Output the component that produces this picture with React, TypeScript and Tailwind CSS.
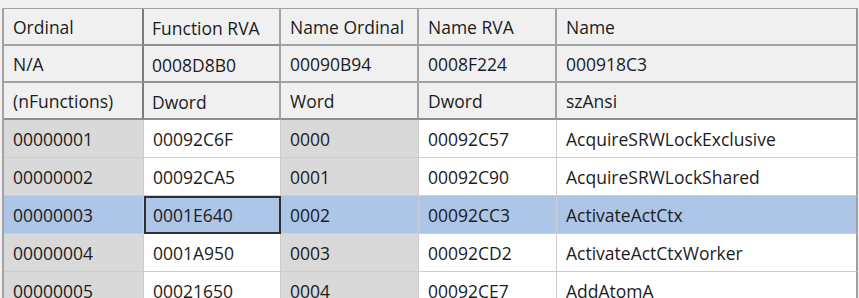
import clsx from 'clsx';

type Row = [string, string, string, string, string];

const header: Row[] = [
  ['Ordinal', 'Function RVA', 'Name Ordinal', 'Name RVA', 'Name'],
  ['N/A', '0008D8B0', '00090B94', '0008F224', '000918C3'],
  ['(nFunctions)', 'Dword', 'Word', 'Dword', 'szAnsi'],
];

const exports: Row[] = [
  ['00000001', '00092C6F', '0000', '00092C57', 'AcquireSRWLockExclusive'],
  ['00000002', '00092CA5', '0001', '00092C90', 'AcquireSRWLockShared'],
  ['00000003', '0001E640', '0002', '00092CC3', 'ActivateActCtx'],
  ['00000004', '0001A950', '0003', '00092CD2', 'ActivateActCtxWorker'],
  ['00000005', '00021650', '0004', '00092CE7', 'AddAtomA'],
];

const widths = ['w-[140px]', 'w-[137px]', 'w-[138px]', 'w-[138px]', 'w-[301px]'];

const selectedRow = 2;
const selectedCol = 1;

export default function App() {
  return (
    <div
      className="w-[859px] h-[298px] overflow-hidden bg-[#f0f0f0] pt-[8px] pl-[2px] text-[17.5px] text-[#1c1c1c]"
      style={{ fontFamily: '"Open Sans", "Noto Sans", sans-serif' }}
    >
      <div className="border-l-2 border-t border-[#a3a3a3] w-max">
        {/* descriptor rows */}
        {header.map((row, r) => (
          <div key={r} className="flex">
            {row.map((text, c) => (
              <div
                key={c}
                className={clsx(
                  widths[c],
                  'h-[37px] flex items-center bg-[#f0f0f0] border-b-2 border-r-2 border-[#a3a3a3] leading-none',
                  c === 0 && 'border-r-[#7d7d7d]',
                  c === 1 ? 'pl-[8px] pt-[4px] border-b-[#8f8f8f]' : 'pl-[9px] pt-[2px]',
                  c === 4 && 'border-r-[#959595]',
                  r === 2 && 'border-b-[#8f8f8f]',
                )}
              >
                {text}
              </div>
            ))}
          </div>
        ))}

        {/* export entries */}
        {exports.map((row, r) => (
          <div key={r} className="flex">
            {row.map((text, c) => {
              const gray = c === 0 || c === 2;
              const sel = r === selectedRow;
              const focus = sel && c === selectedCol;
              return (
                <div
                  key={c}
                  className={clsx(
                    widths[c],
                    'h-[38px] flex items-center leading-none pt-[2px]',
                    sel ? 'bg-[#adc5e7]' : gray ? 'bg-[#d9d9d9]' : 'bg-white',
                    focus
                      ? 'border-2 border-[#2f2f2f] pl-[7px]'
                      : 'border-b border-r border-[#cdcdcd] pl-[9px]',
                    c === 1 && !focus && 'pl-[8px]',
                    c === 4 && !focus && 'border-r-2 border-r-[#a0a0a0]',
                  )}
                >
                  {text}
                </div>
              );
            })}
          </div>
        ))}
      </div>
    </div>
  );
}
